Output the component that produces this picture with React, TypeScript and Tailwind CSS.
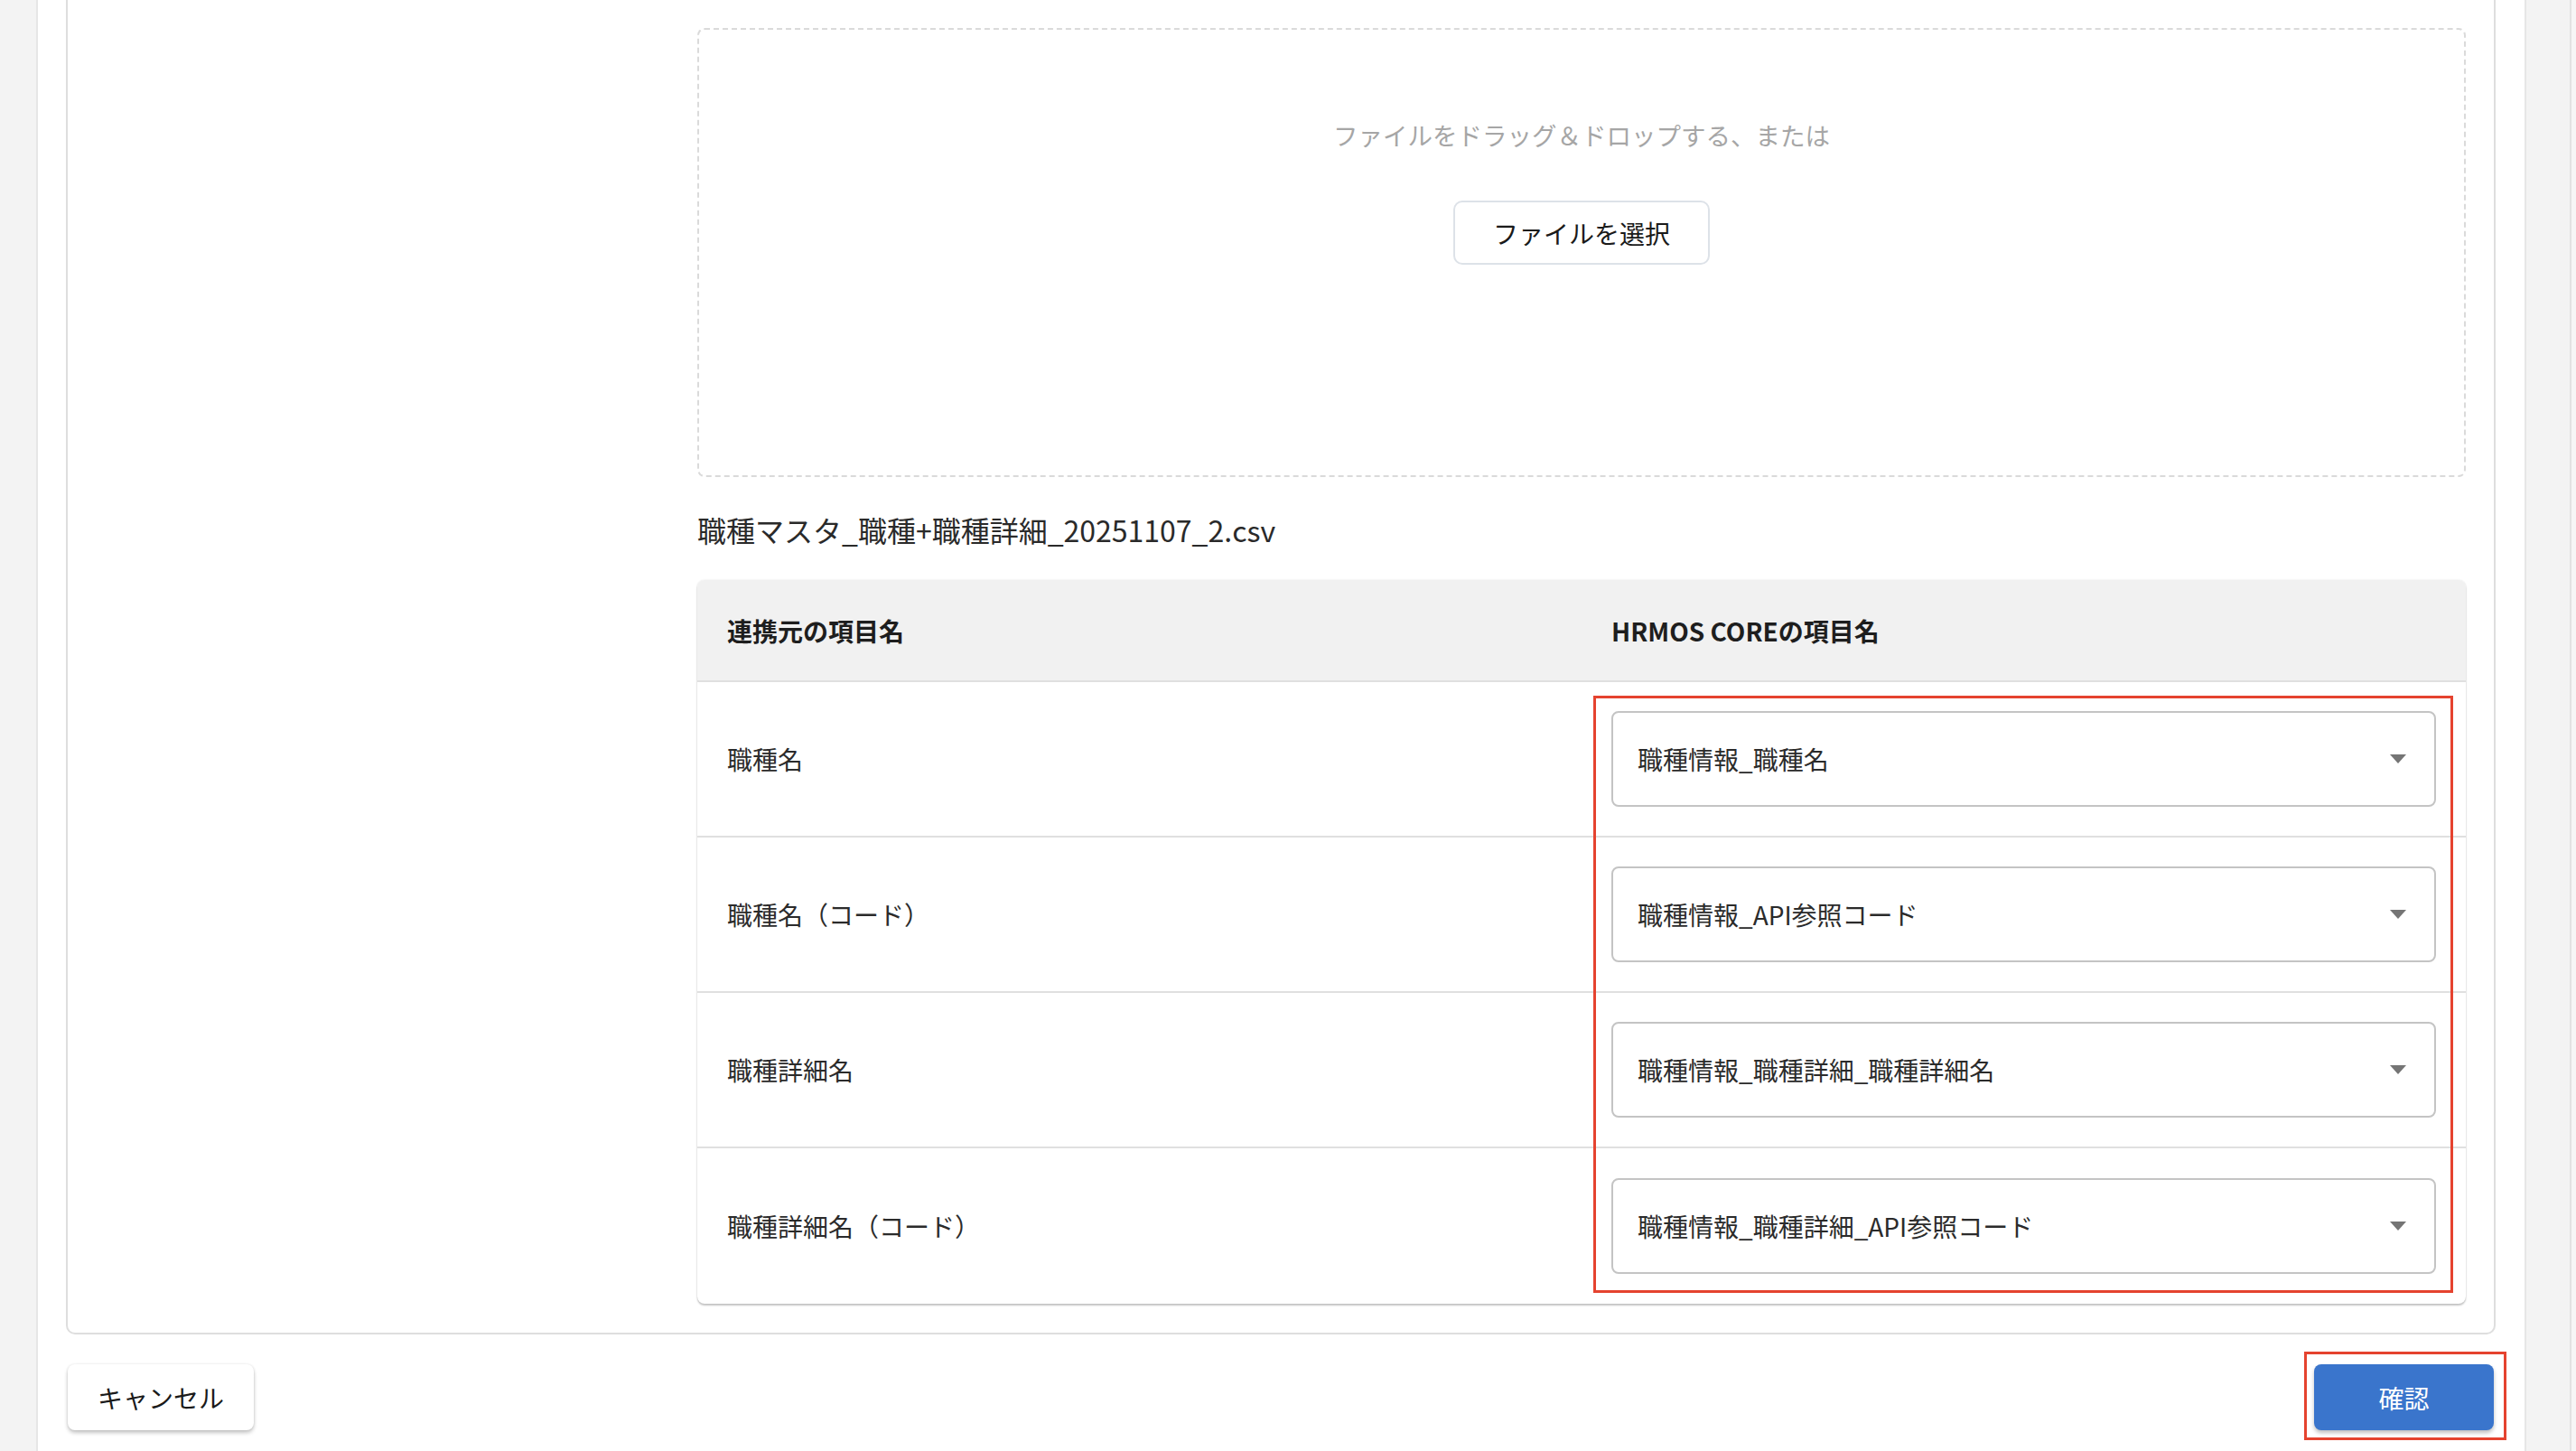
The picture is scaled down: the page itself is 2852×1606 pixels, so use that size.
import React from "react";

const rows = [
  { source: "職種名", target: "職種情報_職種名" },
  { source: "職種名（コード）", target: "職種情報_API参照コード" },
  { source: "職種詳細名", target: "職種情報_職種詳細_職種詳細名" },
  { source: "職種詳細名（コード）", target: "職種情報_職種詳細_API参照コード" },
];

const ArrowDrop = () => (
  <svg width="18" height="10" viewBox="0 0 18 10" aria-hidden="true">
    <polygon points="0,0 18,0 9,10" fill="#757575" />
  </svg>
);

const SelectBox = ({ value }: { value: string }) => (
  <div className="flex h-[106px] w-full items-center justify-between rounded-[8px] border-2 border-[#c4c4c4] bg-white pl-[27px] pr-[31px]">
    <span className="text-[28px] leading-none text-[#2b2b2b]">{value}</span>
    <ArrowDrop />
  </div>
);

const App = () => {
  return (
    <div className="flex h-[1606px] w-full overflow-hidden bg-[#f3f3f3] font-['Noto_Sans_CJK_JP','Noto_Sans',sans-serif] text-[#2b2b2b]">
      <main className="ml-[40px] flex w-[2757px] shrink-0 flex-col border-l-2 border-r-2 border-[#e6e6e6] bg-white pl-[31px] pr-[32px]">
        {/* card */}
        <div className="rounded-b-[10px] border-x-2 border-b-2 border-[#dedede] pb-[32px] pl-[697px] pr-[31px] pt-[31px]">
          <div className="flex h-[497px] flex-col items-center rounded-[8px] border-2 border-dashed border-[#dadada] pt-[96px]">
            <p className="text-[27.5px] leading-[40px] text-[#a6a6a6]">
              ファイルをドラッグ＆ドロップする、または
            </p>
            <button className="mt-[53px] flex h-[71px] items-center rounded-[10px] border-2 border-[#dde2e8] bg-white px-[42px] text-[28px] leading-none text-[#1a1a1a]">
              ファイルを選択
            </button>
          </div>

          <p className="mt-[34px] text-[32px] leading-[48px] text-[#2a2a2a]">
            職種マスタ_職種+職種詳細_20251107_2.csv
          </p>

          <div className="relative mt-[32px] rounded-[8px] bg-white shadow-[0_2px_2px_rgba(0,0,0,0.22),0_0_2px_rgba(0,0,0,0.12)]">
            <div className="grid h-[113px] grid-cols-2 items-center rounded-t-[8px] border-b-2 border-[#e0e0e0] bg-[#f1f1f1]">
              <div className="px-[33px] text-[28px] font-bold text-[#1e1e1e]">連携元の項目名</div>
              <div className="px-[33px] text-[28px] font-bold text-[#1e1e1e]">HRMOS COREの項目名</div>
            </div>
            {rows.map((r, idx) => (
              <div
                key={idx}
                className={
                  idx < rows.length - 1
                    ? "grid h-[172px] grid-cols-2 items-center border-b-2 border-[#e0e0e0]"
                    : "grid h-[172px] grid-cols-2 items-center"
                }
              >
                <div className="px-[33px] text-[28px] leading-none">{r.source}</div>
                <div className="px-[33px]">
                  <SelectBox value={r.target} />
                </div>
              </div>
            ))}
            {/* annotation */}
            <div className="pointer-events-none absolute left-[992px] top-[128px] h-[661px] w-[952px] border-[3px] border-[#e5432f]" />
          </div>
        </div>

        {/* footer buttons */}
        <div className="mt-[33px] flex items-center justify-between pl-[2px] pr-[2px]">
          <button className="flex h-[73px] w-[206px] items-center justify-center rounded-[8px] bg-white text-[28px] leading-none text-[#1a1a1a] shadow-[0_3px_4px_rgba(0,0,0,0.22),0_0_3px_rgba(0,0,0,0.1)]">
            キャンセル
          </button>
          <div className="relative">
            <button className="flex h-[73px] w-[199px] items-center justify-center rounded-[8px] bg-[#3a75cc] text-[28px] leading-none text-white shadow-[0_3px_4px_rgba(0,0,0,0.25)]">
              確認
            </button>
            <div className="pointer-events-none absolute -bottom-[11px] -left-[11px] -right-[14px] -top-[14px] border-[3px] border-[#e5432f]" />
          </div>
        </div>
      </main>
      <div className="flex flex-1 justify-end bg-[#f3f3f3]">
        <div className="h-full w-[7px] border-l-2 border-[#e2e2e2] bg-[#f6f6f6]" />
      </div>
    </div>
  );
};

export default App;
